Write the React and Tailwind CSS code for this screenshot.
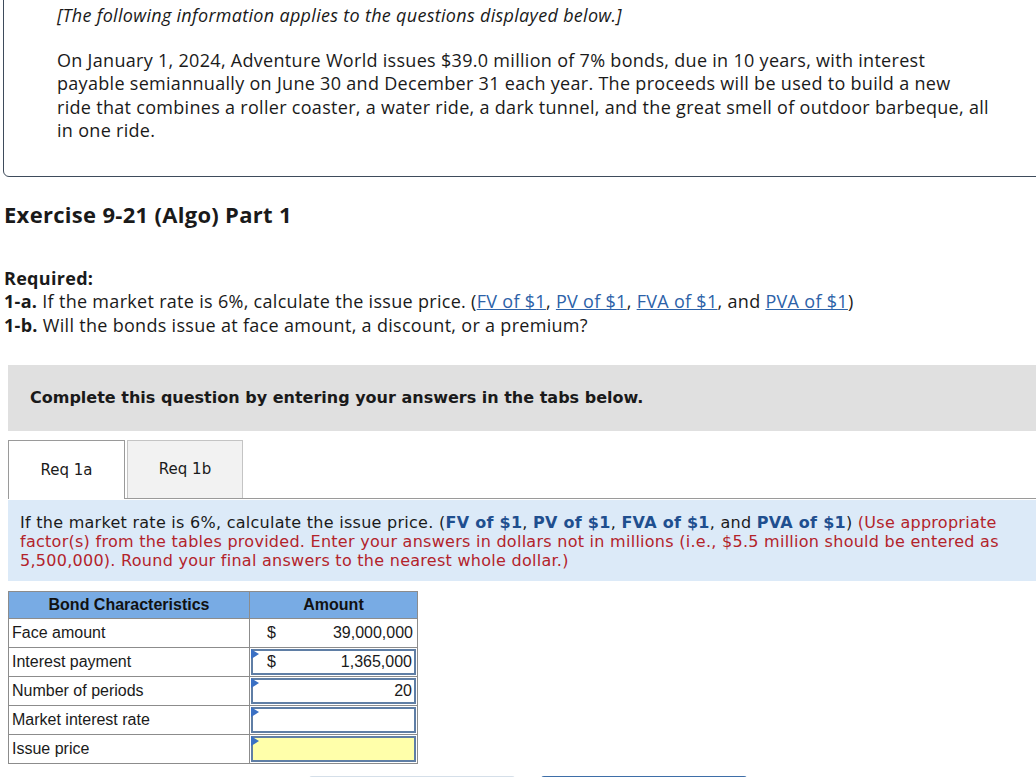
import React from "react";

const sans = { fontFamily: '"Liberation Sans", Arial, sans-serif' };
const proxima = { fontFamily: '"Open Sans", "Liberation Sans", Arial, sans-serif' };

const InputCell = ({ children, yellow }) => (
  <div
    className={`relative mx-px my-px h-[26px] border-2 border-[#5f7ea5] flex items-center pr-[2px] ${
      yellow ? "bg-[#ffffaa]" : "bg-white"
    }`}
  >
    <span className="absolute -left-[2px] -top-[2px] w-0 h-0 border-t-[5px] border-b-[5px] border-l-[8px] border-t-transparent border-b-transparent border-l-[#3a70c4]" />
    {children}
  </div>
);

const rows = [
  { label: "Face amount", dollar: true, value: "39,000,000", input: false },
  { label: "Interest payment", dollar: true, value: "1,365,000", input: true },
  { label: "Number of periods", value: "20", input: true },
  { label: "Market interest rate", value: "", input: true },
  { label: "Issue price", value: "", input: true, yellow: true },
];

export default function App() {
  return (
    <div className="w-[1036px] h-[777px] overflow-hidden bg-white text-[#1a1a1a]" style={sans}>
      <div style={proxima} className="tracking-[0.3px]">
        {/* info box */}
        <div className="ml-[3px] -mr-[6px] -mt-[4px] border border-[#3e4b5b] rounded-b-md pl-[53px] pr-[20px] pt-[7px] pb-[33px] text-[18px] leading-[23.5px]">
          <p className="italic">[The following information applies to the questions displayed below.]</p>
          <p className="mt-[21px]">
            On January 1, 2024, Adventure World issues $39.0 million of 7% bonds, due in 10 years, with interest
            <br />
            payable semiannually on June 30 and December 31 each year. The proceeds will be used to build a new
            <br />
            ride that combines a roller coaster, a water ride, a dark tunnel, and the great smell of outdoor barbeque, all
            <br />
            in one ride.
          </p>
        </div>

        <h2 className="ml-[4px] mt-[25px] text-[22px] font-bold leading-[24px]">Exercise 9-21 (Algo) Part 1</h2>

        <div className="ml-[4px] mt-[41px] text-[18px] leading-[23.5px]">
          <p className="font-bold">Required:</p>
          <p>
            <span className="font-bold">1-a.</span> If the market rate is 6%, calculate the issue price. (
            <a className="text-[#2c62a8] underline">FV of $1</a>, <a className="text-[#2c62a8] underline">PV of $1</a>,{" "}
            <a className="text-[#2c62a8] underline">FVA of $1</a>, and <a className="text-[#2c62a8] underline">PVA of $1</a>)
          </p>
          <p>
            <span className="font-bold">1-b.</span> Will the bonds issue at face amount, a discount, or a premium?
          </p>
        </div>
      </div>

      <div style={{ fontFamily: '"DejaVu Sans", Verdana, sans-serif' }}>
        <div className="ml-[8px] mt-[28px] h-[66px] bg-[#e0e0e0] flex items-center pl-[22px] text-[16px] font-bold">
          Complete this question by entering your answers in the tabs below.
        </div>

        <div className="ml-[8px] mt-[9px] flex items-end border-b border-[#9a9a9a] h-[59px]">
          <div className="w-[117px] h-[59px] bg-white border border-b-0 border-[#9a9a9a] flex items-center justify-center text-[15px] -mb-px">
            Req 1a
          </div>
          <div className="ml-[2px] w-[116px] h-[58px] bg-[#f2f2f2] border border-b-0 border-[#c4c4c4] flex items-center justify-center text-[15px]">
            Req 1b
          </div>
        </div>

        <div className="ml-[8px] mt-px h-[81px] bg-[#dceaf8] pl-[12px] pt-[13px] pr-[20px] text-[16px] leading-[19px] tracking-[0.27px]">
          If the market rate is 6%, calculate the issue price. (
          <b className="text-[#1f4f8f]">FV of $1</b>, <b className="text-[#1f4f8f]">PV of $1</b>,{" "}
          <b className="text-[#1f4f8f]">FVA of $1</b>, and <b className="text-[#1f4f8f]">PVA of $1</b>){" "}
          <span className="text-[#b3232b]">
            (Use appropriate factor(s) from the tables provided. Enter your answers in dollars not in millions (i.e.,
            $5.5 million should be entered as 5,500,000). Round your final answers to the nearest whole dollar.)
          </span>
        </div>
      </div>

      <table className="ml-[8px] mt-[10px] border-collapse text-[16px]" style={sans}>
        <thead>
          <tr className="bg-[#78abe4] h-[27px]">
            <th className="w-[241px] border border-[#8c8c8c] font-bold text-[16px] text-[#111]">Bond Characteristics</th>
            <th className="w-[168px] border border-[#8c8c8c] font-bold text-[16px] text-[#111]">Amount</th>
          </tr>
        </thead>
        <tbody>
          {rows.map((r) => (
            <tr key={r.label} className="h-[29px]">
              <td className="border border-[#8c8c8c] pl-[3px] py-0">{r.label}</td>
              <td className="border border-[#8c8c8c] p-0">
                {r.input ? (
                  <InputCell yellow={r.yellow}>
                    {r.dollar && <span className="ml-[14px]">$</span>}
                    <span className="ml-auto">{r.value}</span>
                  </InputCell>
                ) : (
                  <div className="flex items-center h-[28px] pr-[4px]">
                    <span className="ml-[17px]">$</span>
                    <span className="ml-auto">{r.value}</span>
                  </div>
                )}
              </td>
            </tr>
          ))}
        </tbody>
      </table>

      <div className="mt-[12px] flex ml-[309px] gap-[26px]">
        <div className="w-[206px] h-[10px] rounded-t-[3px] bg-[#d5dfe9]" />
        <div className="w-[206px] h-[10px] rounded-t-[3px] bg-[#3e6ea8]" />
      </div>
    </div>
  );
}
